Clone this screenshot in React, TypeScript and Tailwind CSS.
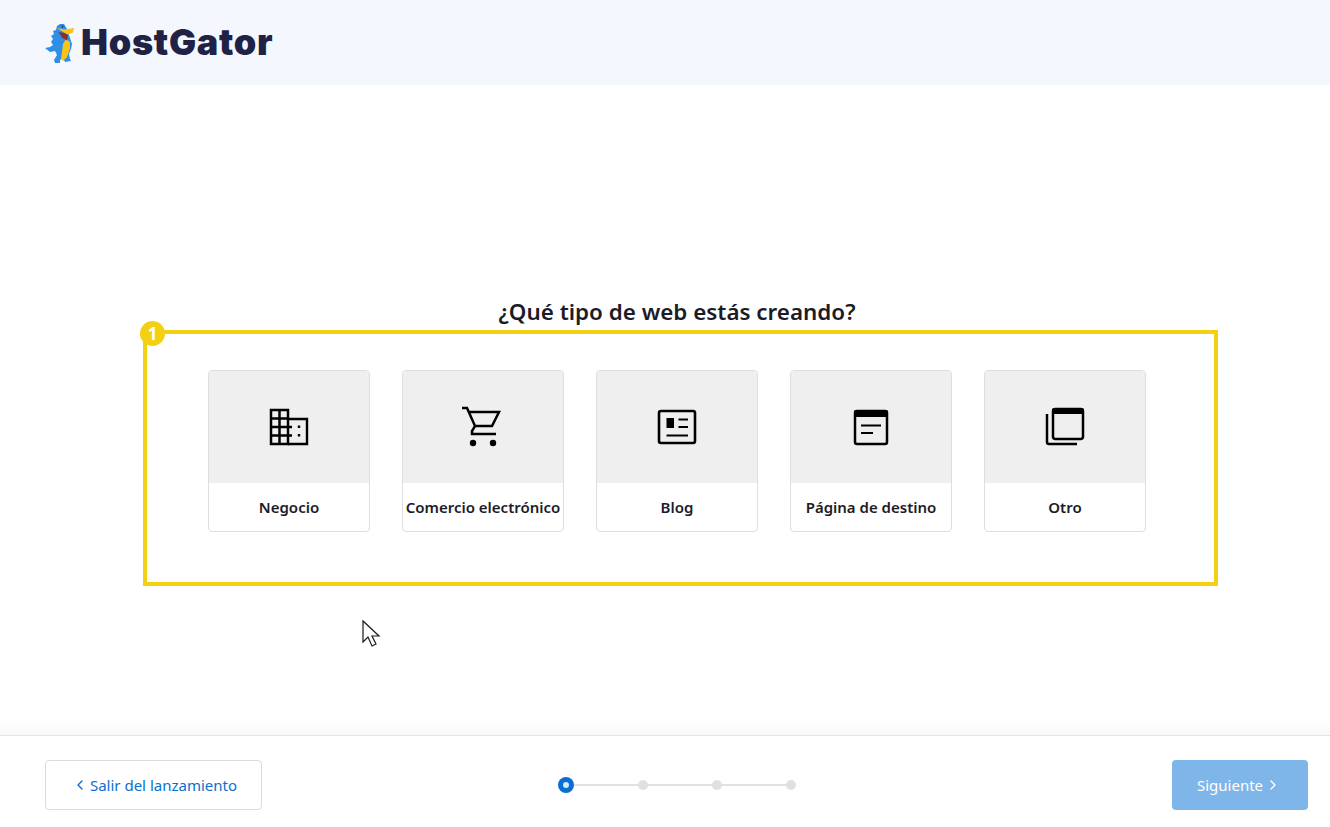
import { ChevronLeft, ChevronRight } from "lucide-react";
import type { ReactNode } from "react";

const font = "[font-family:'Noto_Sans',sans-serif]";

function BuildingIcon() {
  return (
    <svg width="48" height="48" viewBox="0 0 48 48" fill="none" stroke="#000" strokeWidth="2.5">
      <path d="M6 7h17v34H6zM6 15.5h17M6 24h21M6 32.5h21M14.5 7v34" />
      <path d="M23 16h19v25H23" strokeWidth="2.4" />
      <path d="M34 22.5v2.5M34 31v2.5" strokeWidth="2.4" />
    </svg>
  );
}

function CartIcon() {
  return (
    <svg width="48" height="48" viewBox="0 0 48 48" fill="none" stroke="#000" strokeWidth="2.5">
      <path d="M3 5h5l8 18M9 9h31l-7 14H16l-3 5v3h24" />
      <circle cx="14" cy="40" r="3.2" fill="#000" stroke="none" />
      <circle cx="34" cy="40" r="3.2" fill="#000" stroke="none" />
    </svg>
  );
}

function BlogIcon() {
  return (
    <svg width="48" height="48" viewBox="0 0 48 48" fill="none" stroke="#000" strokeWidth="2.6">
      <rect x="6" y="8" width="36" height="32" rx="2" />
      <rect x="13.5" y="15" width="7.5" height="10" fill="#000" stroke="none" />
      <path d="M25.5 16.5h9.5M25.5 24h9.5M13.5 32.5h21.5" strokeWidth="2.2" />
    </svg>
  );
}

function PageIcon() {
  return (
    <svg width="48" height="48" viewBox="0 0 48 48" fill="none" stroke="#000" strokeWidth="2.5">
      <rect x="8" y="8" width="32" height="33" rx="2" />
      <rect x="7" y="7" width="34" height="7" rx="2" fill="#000" stroke="none" />
      <path d="M14 22.5h20M14 30h12" strokeWidth="2.2" />
    </svg>
  );
}

function OtherIcon() {
  return (
    <svg width="48" height="48" viewBox="0 0 48 48" fill="none" stroke="#000" strokeWidth="2.5">
      <rect x="12" y="6" width="30" height="30" rx="2.5" />
      <rect x="11" y="5" width="32" height="6" rx="2" fill="#000" stroke="none" />
      <path d="M6 11v28a2 2 0 0 0 2 2h28" />
    </svg>
  );
}

function GatorLogo() {
  return (
    <svg width="32" height="42" viewBox="0 0 32 42" className="shrink-0">
      <path
        d="M16 2l4 0 3 5 3 9 2 6-1 5-2 5 1 5 1 2-6 1-2-4-3 2 0 3-5 0-1-3 3-5-2-4-5 1-5-4 5-1 3-2-2-3 2-3-2-3 3-2-1-3 3-1 1-4z"
        fill="#2f8fe6"
      />
      <path d="M22 17l4 3 0 7-3 8-4 4-2-2 1-7 1-8z" fill="#fcc419" />
      <path d="M13 6l7 1.500 10-1.500-1 4.500-5 2-4-2z" fill="#fcc419" />
      <path d="M14.500 10l5.500 1 4 2-1 5.500-5-3z" fill="#8d2f23" />
      <circle cx="18.500" cy="4.500" r="0.900" fill="#14325c" />
    </svg>
  );
}

const types: { label: string; icon: ReactNode }[] = [
  { label: "Negocio", icon: <BuildingIcon /> },
  { label: "Comercio electrónico", icon: <CartIcon /> },
  { label: "Blog", icon: <BlogIcon /> },
  { label: "Página de destino", icon: <PageIcon /> },
  { label: "Otro", icon: <OtherIcon /> },
];

function TypeCard({ label, icon }: { label: string; icon: ReactNode }) {
  return (
    <div className="flex h-[162px] w-[162px] flex-col overflow-hidden rounded-[4px] border border-[#dedede] bg-white">
      <div className="flex h-[112px] items-center justify-center bg-[#efefef]">{icon}</div>
      <div className="flex flex-1 items-center justify-center whitespace-nowrap pt-[1px] text-[15px] font-semibold text-[#1c1c28]">
        {label}
      </div>
    </div>
  );
}

export default function App() {
  return (
    <div className={`relative flex h-[827px] w-[1330px] flex-col overflow-hidden bg-white ${font}`}>
      <header className="flex h-[85px] items-center bg-[#f4f8fe] pl-[44px]">
        <GatorLogo />
        <span className="mb-[1px] ml-[5px] font-['Inter',sans-serif] text-[36px] font-black leading-none tracking-[0.02em] text-[#1f2145]">
          HostGator
        </span>
      </header>

      <main className="flex-1 pl-[143px] pt-[212px]">
        <h1 className="h-[33px] w-[1068px] text-center text-[22.4px] font-semibold leading-[30px] text-[#1c1c28]">
          ¿Qué tipo de web estás creando?
        </h1>
        <div className="relative h-[256px] w-[1075px] border-4 border-[#f4d013] pl-[61px] pt-[36px]">
          <span className="absolute -left-[7px] -top-[13px] flex h-[25px] w-[25px] items-center justify-center rounded-full bg-[#f4d013] text-[17px] font-bold leading-none text-white">
            1
          </span>
          <div className="flex gap-[32px]">
            {types.map((t) => (
              <TypeCard key={t.label} label={t.label} icon={t.icon} />
            ))}
          </div>
        </div>
      </main>

      <div className="h-[15px] bg-gradient-to-b from-white to-[#f8f8f8]" />

      <footer className="flex h-[92px] items-center border-t border-[#e3e3e3] pl-[45px] pr-[22px] pt-[7px]">
        <button className="flex h-[50px] w-[217px] items-center justify-center gap-[2px] rounded-[4px] border border-[#dcdcdc] bg-white pl-[2px] text-[15px] text-[#0b6fcf]">
          <ChevronLeft className="h-4 w-4" strokeWidth={2} />
          Salir del lanzamiento
        </button>

        <div className="ml-[296px] flex items-center">
          <span className="flex h-4 w-4 items-center justify-center rounded-full bg-[#0b6fd2]">
            <span className="h-[6px] w-[6px] rounded-full bg-[#cdeeff]" />
          </span>
          <span className="h-[2px] w-16 bg-[#e2e2e2]" />
          <span className="h-[10px] w-[10px] rounded-full bg-[#e0e0e0]" />
          <span className="h-[2px] w-16 bg-[#e2e2e2]" />
          <span className="h-[10px] w-[10px] rounded-full bg-[#e0e0e0]" />
          <span className="h-[2px] w-16 bg-[#e2e2e2]" />
          <span className="h-[10px] w-[10px] rounded-full bg-[#e0e0e0]" />
        </div>

        <button className="ml-auto flex h-[50px] w-[136px] items-center justify-center gap-[2px] rounded-[4px] bg-[#7fb6e9] pr-[2px] text-[15px] text-white">
          Siguiente
          <ChevronRight className="h-4 w-4" strokeWidth={2} />
        </button>
      </footer>

      {/* mouse pointer caught in the screenshot */}
      <svg className="absolute left-[361px] top-[619px]" width="21" height="30" viewBox="0 0 21 30">
        <path d="M2 2v21l5-5 4 9 4-2-4-8h7z" fill="#fff" stroke="#1a1a1a" strokeWidth="1.2" strokeLinejoin="miter" />
      </svg>
    </div>
  );
}
